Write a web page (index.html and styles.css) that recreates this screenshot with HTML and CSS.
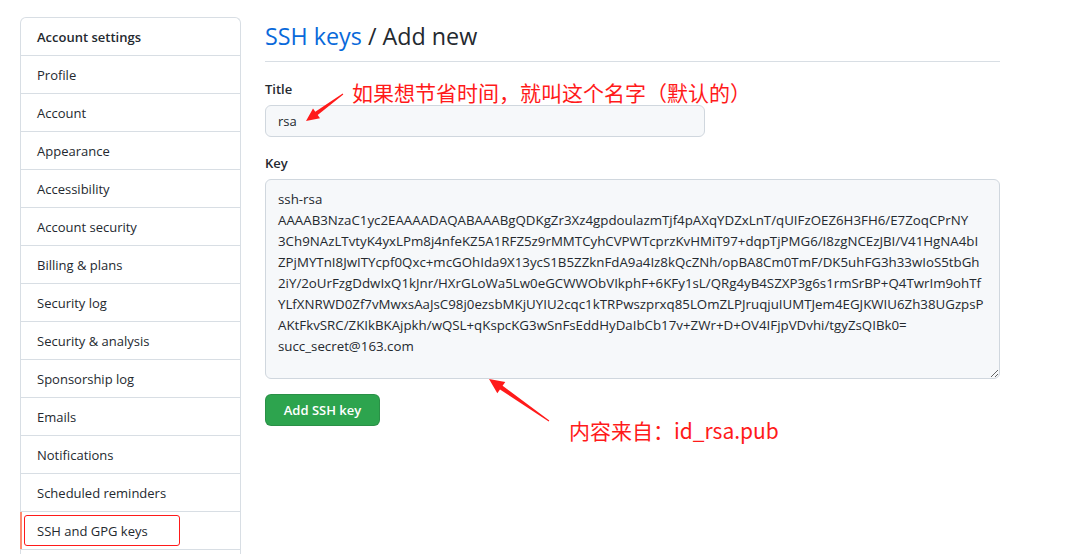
FILE: index.html
```html
<!DOCTYPE html>
<html lang="en">
<head>
<meta charset="utf-8">
<title>SSH keys / Add new</title>
<link rel="stylesheet" href="styles.css">
</head>
<body>
<div class="page">
  <nav class="menu">
    <div class="menu-heading">Account settings</div>
    <a class="menu-item" href="#">Profile</a>
    <a class="menu-item" href="#">Account</a>
    <a class="menu-item" href="#">Appearance</a>
    <a class="menu-item" href="#">Accessibility</a>
    <a class="menu-item" href="#">Account security</a>
    <a class="menu-item" href="#">Billing &amp; plans</a>
    <a class="menu-item" href="#">Security log</a>
    <a class="menu-item" href="#">Security &amp; analysis</a>
    <a class="menu-item" href="#">Sponsorship log</a>
    <a class="menu-item" href="#">Emails</a>
    <a class="menu-item" href="#">Notifications</a>
    <a class="menu-item" href="#">Scheduled reminders</a>
    <a class="menu-item selected" href="#">SSH and GPG keys</a>
  </nav>
  <main class="main">
    <div class="subhead">
      <h2 class="subhead-title"><a href="#">SSH keys</a> / Add new</h2>
    </div>
    <form class="form">
      <label class="label" for="title">Title</label>
      <input class="input" id="title" type="text" value="rsa">
      <label class="label key-label" for="key">Key</label>
      <textarea class="textarea" id="key" wrap="off">ssh-rsa
AAAAB3NzaC1yc2EAAAADAQABAAABgQDKgZr3Xz4gpdoulazmTjf4pAXqYDZxLnT/qUIFzOEZ6H3FH6/E7ZoqCPrNY
3Ch9NAzLTvtyK4yxLPm8j4nfeKZ5A1RFZ5z9rMMTCyhCVPWTcprzKvHMiT97+dqpTjPMG6/I8zgNCEzJBI/V41HgNA4bI
ZPjMYTnI8JwITYcpf0Qxc+mcGOhIda9X13ycS1B5ZZknFdA9a4Iz8kQcZNh/opBA8Cm0TmF/DK5uhFG3h33wIoS5tbGh
2iY/2oUrFzgDdwIxQ1kJnr/HXrGLoWa5Lw0eGCWWObVIkphF+6KFy1sL/QRg4yB4SZXP3g6s1rmSrBP+Q4TwrIm9ohTf
YLfXNRWD0Zf7vMwxsAaJsC98j0ezsbMKjUYIU2cqc1kTRPwszprxq85LOmZLPJruqjuIUMTJem4EGJKWIU6Zh38UGzpsP
AKtFkvSRC/ZKIkBKAjpkh/wQSL+qKspcKG3wSnFsEddHyDaIbCb17v+ZWr+D+OV4IFjpVDvhi/tgyZsQIBk0=
succ_secret@163.com</textarea>
      <button class="btn" type="button">Add SSH key</button>
    </form>
  </main>
</div>

<div class="note note-title">如果想节省时间，就叫这个名字（默认的）</div>
<div class="note note-key">内容来自：id_rsa.pub</div>
<div class="note-box"></div>
<svg class="arrows" width="1076" height="554" viewBox="0 0 1076 554" aria-hidden="true">
  <polygon points="306,121 320.0,118.2 317.7,114.9 343.3,94.4 342.7,93.6 315.3,111.7 313.0,108.5" />
  <polygon points="489,379 505.3,381.9 502.6,385.8 549.3,420.5 548.7,421.5 500.0,389.4 497.3,393.3" />
</svg>
</body>
</html>
```

FILE: styles.css
```css
html, body {
  margin: 0;
  padding: 0;
  background: #ffffff;
}

body {
  width: 1076px;
  height: 554px;
  overflow: hidden;
  position: relative;
  font-family: "Open Sans", "Noto Sans", sans-serif;
  font-size: 14px;
  color: #24292f;
}

.page {
  display: flex;
  align-items: flex-start;
  gap: 24px;
  padding: 17px 0 0 20px;
}

.menu {
  width: 221px;
  flex: none;
  display: flex;
  flex-direction: column;
  border: 1px solid #d8dee4;
  border-bottom: none;
  border-radius: 6px 6px 0 0;
  box-sizing: border-box;
}

.menu::after {
  content: "";
  display: block;
  height: 20px;
  border-top: 1px solid #d8dee4;
}

.menu-heading {
  padding: 9px 16px 7px;
  line-height: 21px;
  font-weight: 600;
  font-size: 13px;
  color: #24292f;
}

.menu-item {
  padding: 9px 16px 7px;
  line-height: 21px;
  font-size: 13px;
  color: #24292f;
  text-decoration: none;
  border-top: 1px solid #d8dee4;
  position: relative;
}

.menu-item.selected::before {
  content: "";
  position: absolute;
  left: -1px;
  top: 0;
  bottom: 0;
  width: 2px;
  background: #fd8c73;
}

.main {
  width: 735px;
  flex: none;
}

.subhead {
  border-bottom: 1px solid #d8dee4;
  padding: 3px 0 8px;
}

.subhead-title {
  margin: 0;
  font-size: 23.3px;
  font-weight: 400;
  line-height: 33px;
  color: #24292f;
}

.subhead-title a {
  color: #0969da;
  text-decoration: none;
}

.form {
  display: flex;
  flex-direction: column;
  align-items: flex-start;
  padding-top: 17px;
}

.label {
  font-weight: 600;
  font-size: 13px;
  line-height: 21px;
  margin-bottom: 5px;
}

.key-label {
  margin-top: 16px;
}

.input {
  width: 440px;
  height: 32px;
  box-sizing: border-box;
  padding: 5px 12px;
  font: inherit;
  font-size: 13px;
  color: #24292f;
  background: #f6f8fa;
  border: 1px solid #d0d7de;
  border-radius: 6px;
  outline: none;
}

.textarea {
  width: 735px;
  height: 200px;
  box-sizing: border-box;
  padding: 9px 12px;
  font: inherit;
  font-size: 13.3px;
  line-height: 21px;
  color: #24292f;
  background: #f6f8fa;
  border: 1px solid #d0d7de;
  border-radius: 6px;
  outline: none;
  overflow: hidden;
  white-space: pre;
  resize: vertical;
}

.btn {
  margin-top: 15px;
  width: 115px;
  height: 32px;
  font: inherit;
  font-size: 13px;
  font-weight: 600;
  color: #ffffff;
  background: #2da44e;
  border: 1px solid rgba(27, 31, 36, 0.15);
  border-radius: 6px;
}

.note {
  position: absolute;
  font-family: "Noto Sans CJK SC", "Noto Sans", sans-serif;
  font-size: 21px;
  line-height: 24px;
  color: #ff1a1a;
  white-space: nowrap;
}

.note-title {
  left: 352px;
  top: 80px;
}

.note-key {
  left: 569px;
  top: 418px;
}

.note-box {
  position: absolute;
  left: 24px;
  top: 515px;
  width: 156px;
  height: 31px;
  box-sizing: border-box;
  border: 1.5px solid #ff1a1a;
  border-radius: 3px;
}

.arrows {
  position: absolute;
  left: 0;
  top: 0;
  pointer-events: none;
}

.arrows polygon {
  fill: #ff1a1a;
}
```
